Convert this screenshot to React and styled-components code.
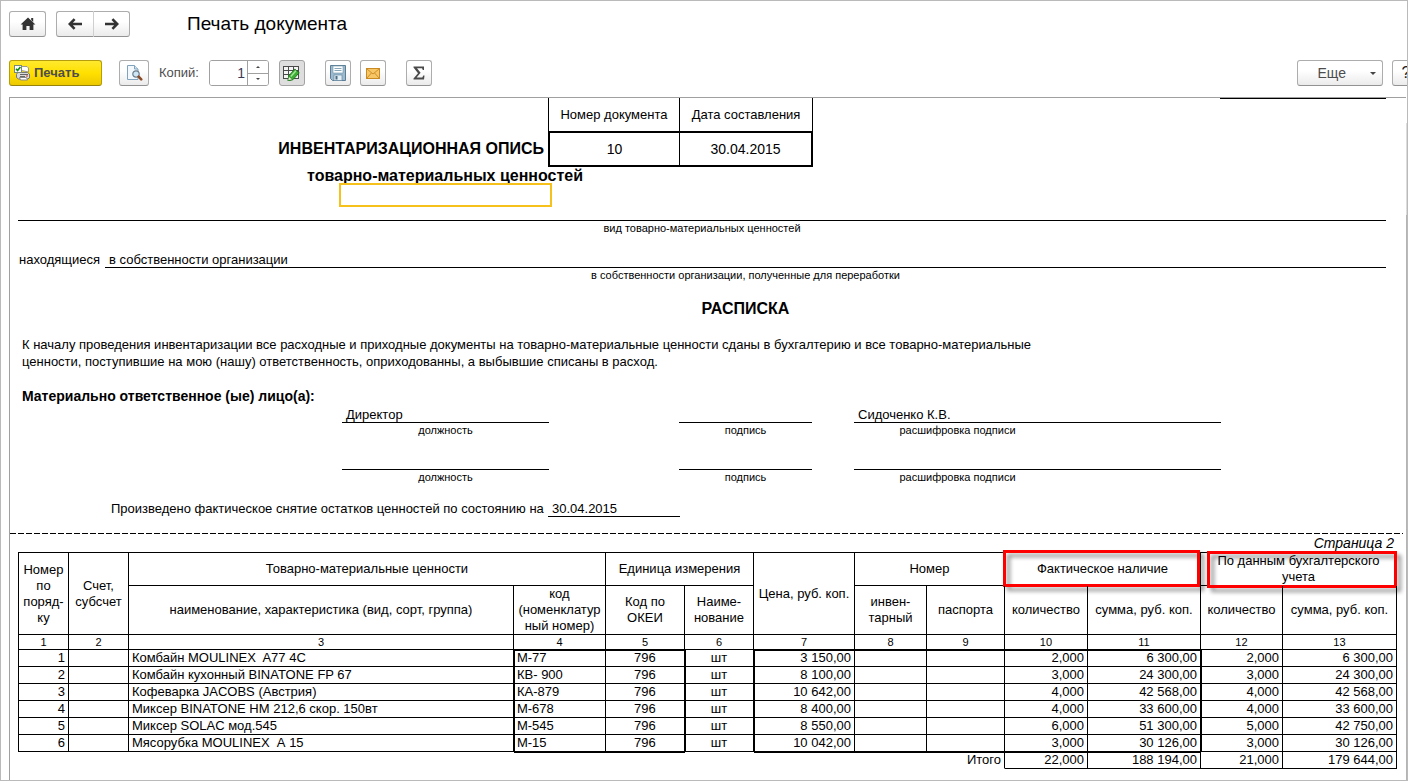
import React, { useState } from 'react';
import styled, { createGlobalStyle, css } from 'styled-components';

const GlobalStyle = createGlobalStyle`
  * {
    box-sizing: border-box;
  }

  body {
    margin: 0;
    background: #fff;
    color: #000;
    font-family: 'Liberation Sans', Arial, sans-serif;
    font-size: 13px;
    line-height: 16px;
  }

  button, input {
    font: inherit;
    color: inherit;
    margin: 0;
    padding: 0;
  }
`;

const Frame = styled.div`
  display: flex;
  flex-direction: column;
  min-height: 100vh;
  border: 1px solid #bababa;
  overflow: hidden;
`;

/* ---------- window header ---------- */

const NavBar = styled.header`
  display: flex;
  align-items: center;
  gap: 10px;
  padding: 10px 8px 0;
`;

const Title = styled.h1`
  margin: 0 0 0 47px;
  font-size: 19px;
  line-height: 24px;
  font-weight: 400;
`;

const Button = styled.button`
  display: flex;
  align-items: center;
  justify-content: center;
  width: ${({ $width }) => $width || 26}px;
  height: 26px;
  flex: none;
  border: 1px solid #adadad;
  border-bottom-color: #929292;
  border-radius: 3px;
  background: linear-gradient(#fff 40%, #ebebeb);
  color: #4d4d4d;

  ${({ $pressed }) =>
    $pressed &&
    css`
      background: #dedede;
      border-color: #a3a3a3;
    `}
`;

const NavPair = styled.div`
  display: flex;

  ${Button}:first-child {
    border-radius: 3px 0 0 3px;
    border-right-color: #cfcfcf;
  }

  ${Button}:last-child {
    border-radius: 0 3px 3px 0;
    border-left: 0;
  }
`;

/* ---------- toolbar ---------- */

const Toolbar = styled.div`
  display: flex;
  align-items: center;
  padding: 23px 0 11px 8px;
`;

const ToolGroup = styled.div`
  display: flex;
  align-items: center;
  gap: ${({ $gap }) => $gap || 10}px;
  margin-left: ${({ $before }) => $before || 0}px;
`;

const PrintButton = styled(Button)`
  justify-content: flex-start;
  gap: 4px;
  padding-left: 4px;
  border-color: #b59d0c;
  border-bottom-color: #97820a;
  background: linear-gradient(#ffe92e, #ffe000 50%, #ecc900);
  font-weight: 700;
`;

const CopiesLabel = styled.label`
  color: #4d4d4d;
  font-size: 13px;
`;

const Spinner = styled.div`
  display: flex;
  width: 60px;
  height: 26px;
  border: 1px solid #a0a0a0;
  border-radius: 3px;
  overflow: hidden;

  input {
    flex: 1;
    width: 0;
    border: 0;
    outline: 0;
    text-align: right;
    padding-right: 2px;
    font-size: 14px;
    color: #3a3a55;
  }
`;

const Steps = styled.div`
  display: flex;
  flex-direction: column;
  width: 21px;
  border-left: 1px solid #a0a0a0;

  button {
    display: flex;
    align-items: center;
    justify-content: center;
    flex: 1;
    border: 0;
    background: #fff;
  }

  button + button {
    border-top: 1px solid #a0a0a0;
  }
`;

const ToolbarEnd = styled.div`
  display: flex;
  gap: 9px;
  margin-left: auto;
  margin-right: -13px;
`;

const MoreButton = styled(Button)`
  justify-content: flex-end;
  gap: 24px;
  padding-right: 6px;
  font-size: 14px;
`;

const HelpButton = styled(Button)`
  font-size: 16px;
  color: #222;
`;

/* ---------- printed sheet ---------- */

const Viewer = styled.div`
  display: flex;
  flex: 1;
  padding-left: 8px;
`;

const Sheet = styled.main`
  flex: 1;
  min-width: 0;
  border-top: 1px solid #a0a0a0;
  border-left: 1px solid #a0a0a0;
`;

const ScrollEdge = styled.div`
  width: 1px;
  margin-top: 26px;
  background: linear-gradient(#dcdcdc 92px, #b4b4b4 92px);
`;

const Page = styled.section`
  padding: 0 20px 16px 8px;
`;

const DocHead = styled.div`
  display: flex;
  align-items: flex-end;
`;

const DocTitle = styled.h2`
  width: 530px;
  margin: 0;
  padding-right: 4px;
  text-align: right;
  font-size: 16px;
  line-height: 36px;
`;

const MetaTable = styled.table`
  width: 265px;
  border-spacing: 0;
  table-layout: fixed;

  th, td {
    padding: 0;
    text-align: center;
    font-weight: 400;
  }

  th {
    height: 33px;
    border-left: 1px solid #000;
  }

  th:first-child {
    width: 131px;
  }

  th:last-child {
    border-right: 1px solid #000;
  }

  td {
    height: 36px;
    border: 2px solid #000;
    border-right: 0;
    font-size: 14px;
  }

  td:last-child {
    border-left-width: 1px;
    border-right: 2px solid #000;
  }
`;

const TopRule = styled.div`
  align-self: flex-start;
  width: 166px;
  margin-left: auto;
  border-top: 1px solid #000;
`;

const Subject = styled.div`
  width: 284px;
  margin: 2px 0 13px 285px;
`;

const SubjectText = styled.h3`
  margin: 0;
  text-align: center;
  white-space: nowrap;
  font-size: 16px;
  line-height: 14px;
`;

const ActiveCell = styled.div`
  position: relative;
  width: 213px;
  height: 24px;
  margin: 0 auto;
  border: 2px solid #f6c11b;
  background: #fff;
`;

const Caption = styled.div`
  width: ${({ $width }) => ($width ? `${$width}px` : 'auto')};
  font-size: 11px;
  line-height: 14px;
  text-align: center;
`;

const Rule = styled.div`
  border-top: 1px solid #000;
`;

const Line = styled.div`
  display: flex;
  margin-top: 16px;
  line-height: 18px;
`;

const LineLabel = styled.span`
  width: 87px;
  padding-left: 1px;
`;

const Field = styled.div`
  flex: 1;
`;

const Value = styled.div`
  height: 17px;
  padding-left: 4px;
  border-bottom: 1px solid #000;
  line-height: 18px;
`;

const ReceiptTitle = styled.h2`
  margin: 17px 0;
  padding-left: 87px;
  text-align: center;
  font-size: 16px;
  line-height: 20px;
`;

const Statement = styled.p`
  margin: 0 0 17px;
  padding-left: 4px;
  line-height: 17px;
`;

const PersonsTitle = styled.h3`
  margin: 0 0 1px;
  padding-left: 4px;
  font-size: 14px;
  line-height: 18px;
`;

const SignatureRow = styled.div`
  display: grid;
  grid-template-columns: 207px 46px 133px 367px;
  column-gap: 42px;
  padding-left: 324px;
  margin-bottom: 16px;

  > :nth-child(2) {
    grid-column: 3;
  }
`;

const StockDate = styled.div`
  display: flex;
  padding-left: 93px;
  line-height: 18px;
`;

const StockText = styled.span`
  width: 437px;
  height: 17px;
`;

const DateValue = styled(Value)`
  width: 132px;
`;

const PageBreak = styled.div`
  height: 1px;
  margin-right: 3px;
  background: repeating-linear-gradient(90deg, #000 0 6px, transparent 6px 8px);
`;

const PageNumber = styled.div`
  padding-right: 3px;
  text-align: right;
  font-size: 14px;
  line-height: 18px;
  font-style: italic;
`;

const SecondPage = styled.section`
  padding: 0 9px 10px 8px;
`;

/* ---------- inventory table ---------- */

const Inventory = styled.table`
  width: 100%;
  table-layout: fixed;
  border-spacing: 0;
`;

const Head = styled.th`
  position: relative;
  height: ${({ $height }) => $height}px;
  padding: 0;
  border-right: 1px solid #000;
  border-bottom: 1px solid #000;
  border-top: ${({ $top }) => ($top ? '1px solid #000' : '0')};
  border-left: ${({ $first }) => ($first ? '1px solid #000' : '0')};
  font-weight: 400;
  font-size: ${({ $small }) => ($small ? 11 : 13)}px;
  line-height: ${({ $small }) => ($small ? 14 : 16)}px;
  text-align: center;
  white-space: nowrap;
`;

const thickEdges = ({ $thickTop, $thickLeft }) => {
  const edges = [];
  if ($thickTop) edges.push('inset 0 1px 0 #000');
  if ($thickLeft) edges.push('inset 1px 0 0 #000');
  return edges.length ? edges.join(', ') : 'none';
};

const Cell = styled.td`
  height: 17px;
  padding: 0 3px;
  border-right: 1px solid #000;
  border-bottom: 1px solid #000;
  border-left: ${({ $first }) => ($first ? '1px solid #000' : '0')};
  box-shadow: ${thickEdges};
  text-align: ${({ $align }) => $align || 'left'};
  white-space: pre;
`;

const TotalCell = styled(Cell)`
  border-bottom: 1px solid ${({ $filled }) => ($filled ? '#000' : 'transparent')};
  border-right: ${({ $open }) => ($open ? '0' : '1px solid #000')};
  text-align: right;
`;

// red frame drawn over a header cell
const Mark = styled.span`
  position: absolute;
  inset: ${({ $inset }) => $inset};
  border: 3px solid #f00;
  filter: drop-shadow(4px 4px 2px rgba(0, 0, 0, 0.45));
`;

const columnWidths = [51, 60, null, 92, 79, 69, 101, 72, 78, 83, 113, 82, 114];

const aligns = [
  'right', 'left', 'left', 'left', 'center', 'center', 'right',
  'left', 'left', 'right', 'right', 'right', 'right',
];

const rows = [
  ['1', '', 'Комбайн MOULINEX  A77 4C', 'М-77', '796', 'шт', '3 150,00', '', '', '2,000', '6 300,00', '2,000', '6 300,00'],
  ['2', '', 'Комбайн кухонный BINATONE FP 67', 'КВ- 900', '796', 'шт', '8 100,00', '', '', '3,000', '24 300,00', '3,000', '24 300,00'],
  ['3', '', 'Кофеварка JACOBS (Австрия)', 'КА-879', '796', 'шт', '10 642,00', '', '', '4,000', '42 568,00', '4,000', '42 568,00'],
  ['4', '', 'Миксер BINATONE HM 212,6 скор. 150вт', 'М-678', '796', 'шт', '8 400,00', '', '', '4,000', '33 600,00', '4,000', '33 600,00'],
  ['5', '', 'Миксер SOLAC мод.545', 'М-545', '796', 'шт', '8 550,00', '', '', '6,000', '51 300,00', '5,000', '42 750,00'],
  ['6', '', 'Мясорубка MOULINEX  А 15', 'М-15', '796', 'шт', '10 042,00', '', '', '3,000', '30 126,00', '3,000', '30 126,00'],
];

const thickLeftColumns = [3, 5, 6, 11];
const thickTopColumns = [3, 4, 6, 7, 8, 9, 10];

/* ---------- icons ---------- */

const HomeIcon = () => (
  <svg width="16" height="14" viewBox="0 0 16 14" fill="#333">
    <path d="M8 0.5 15.4 7.6H13.4V13H9.6V9H6.4V13H2.6V7.6H0.6Z" />
    <path d="M11.2 1h2v4l-2-2z" />
  </svg>
);

const ArrowIcon = ({ right }) => (
  <svg width="14" height="12" viewBox="0 0 14 12" fill="none" stroke="#333" strokeWidth="2.6">
    {right ? <path d="M0 6h12M7.4 1.2 12.2 6l-4.8 4.8" /> : <path d="M14 6H2M6.6 1.2 1.8 6l4.8 4.8" />}
  </svg>
);

const PrintIcon = () => (
  <svg width="16" height="16" viewBox="0 0 16 16">
    <path d="M5.5 5V1.5h7.5l1.5 1.5V7z" fill="#fff" stroke="#9a9a9a" />
    <path d="M3.5 7.5h10l2 1.5v4l-2 1h-9l-2-1.5v-3z" fill="#d9d9d9" stroke="#777" />
    <path d="M6 9.5h8M6 11.5h5" stroke="#666" />
    <path d="M12 11h2" stroke="#d03a2a" />
    <path d="M5.5 12.5h7l1 2.5h-7z" fill="#fff" stroke="#888" />
    <rect x="0.5" y="0.5" width="7" height="7" fill="#fff" stroke="#7a8a7a" />
    <path d="M2 3.8 3.6 5.6 6.4 2" fill="none" stroke="#128a1c" strokeWidth="1.6" />
  </svg>
);

const PreviewIcon = () => (
  <svg width="17" height="16" viewBox="0 0 17 16">
    <path d="M1.5 0.5h7l3.5 3.5v10.5H1.5z" fill="#f2f8fc" stroke="#7fa3bd" />
    <path d="M8.5 0.5v3.5h3.5" fill="#d4e4ef" stroke="#7fa3bd" />
    <circle cx="10" cy="9" r="3.2" fill="#cfe6f5" stroke="#6b7d8c" strokeWidth="1.2" />
    <path d="M12.6 11.6l2.6 2.8" stroke="#8a4b26" strokeWidth="2.6" strokeLinecap="round" />
  </svg>
);

const EditGridIcon = () => (
  <svg width="17" height="16" viewBox="0 0 17 16">
    <rect x="0.5" y="1.5" width="15" height="12" fill="#f4f4f4" stroke="#4a4a4a" />
    <path d="M0.5 5.5h15M0.5 9.5h15M5.5 1.5v12M10.5 1.5v12" stroke="#4a4a4a" />
    <path d="M5.600 11 11.800 4.200l4.400 3.600-6.200 6.800-4.800 1.200z" fill="#3fae35" stroke="#1c7a1a" />
    <path d="M7.800 11.400 13 5.800" stroke="#a6e59a" strokeWidth="1.4" />
    <path d="M4.800 15.600 5.800 11.400l3.800 3.200z" fill="#f1f7d8" stroke="#1c7a1a" strokeWidth="0.6" />
  </svg>
);

const SaveIcon = () => (
  <svg width="16" height="16" viewBox="0 0 16 16">
    <path d="M0.5 0.5h15v15h-13l-2-2z" fill="#9dbace" stroke="#5b7d96" />
    <rect x="3" y="1" width="10" height="7" fill="#fff" stroke="#7394aa" strokeWidth="0.6" />
    <path d="M4.500 3.500h7M4.500 5.500h7" stroke="#8aa7ba" />
    <rect x="4" y="10" width="8" height="5.500" fill="#e3eef5" stroke="#5b7d96" strokeWidth="0.6" />
    <rect x="5.500" y="11" width="2" height="3.500" fill="#4b6c84" />
  </svg>
);

const MailIcon = () => (
  <svg width="14" height="11" viewBox="0 0 14 11">
    <rect x="0.5" y="0.5" width="13" height="10" fill="#f6c667" stroke="#c98a22" />
    <path d="M1 1l6 5 6-5M1 10l4.400-5M13 10 8.600 5" fill="none" stroke="#c98a22" strokeWidth="0.9" />
  </svg>
);

const SumIcon = () => (
  <svg width="12" height="14" viewBox="0 0 12 14" fill="#4a4a4a">
    <path d="M0.5 0.5H11V4H9.800L9 2.300H4L7.600 6.800 3.600 11.600H9.300L10.300 9.600H11.500L11 13.500H0.500V12.600L5 7.300 0.500 1.600Z" />
  </svg>
);

const Triangle = ({ up, size = 3 }) => (
  <svg width={size * 2} height={size} viewBox="0 0 6 3" fill="#444">
    <path d={up ? 'M0 3 3 0l3 3z' : 'M0 0h6L3 3z'} />
  </svg>
);

const SignatureLine = ({ post, name }) => (
  <SignatureRow>
    <div>
      <Value>{post}</Value>
      <Caption>должность</Caption>
    </div>
    <div>
      <Value />
      <Caption>подпись</Caption>
    </div>
    <div>
      <Value>{name}</Value>
      <Caption $width={207}>расшифровка подписи</Caption>
    </div>
  </SignatureRow>
);

const InventoryTable = () => (
  <Inventory>
    <colgroup>
      {columnWidths.map((width, i) => (
        <col key={i} width={width || undefined} />
      ))}
    </colgroup>
    <thead>
      <tr>
        <Head $top $first rowSpan={2}>Номер<br />по<br />поряд-<br />ку</Head>
        <Head $top rowSpan={2}>Счет,<br />субсчет</Head>
        <Head $top $height={34} colSpan={2}>Товарно-материальные ценности</Head>
        <Head $top colSpan={2}>Единица измерения</Head>
        <Head $top rowSpan={2}>Цена, руб. коп.</Head>
        <Head $top colSpan={2}>Номер</Head>
        <Head $top colSpan={2}>
          Фактическое наличие
          <Mark $inset="-3px 0 -2px -2px" />
        </Head>
        <Head $top colSpan={2}>
          По данным бухгалтерского<br />учета
          <Mark $inset="-2px -1px -3px 6px" />
        </Head>
      </tr>
      <tr>
        <Head $height={49}>наименование, характеристика (вид, сорт, группа)</Head>
        <Head>код<br />(номенклатур<br />ный номер)</Head>
        <Head>Код по<br />ОКЕИ</Head>
        <Head>Наиме-<br />нование</Head>
        <Head>инвен-<br />тарный</Head>
        <Head>паспорта</Head>
        <Head>количество</Head>
        <Head>сумма, руб. коп.</Head>
        <Head>количество</Head>
        <Head>сумма, руб. коп.</Head>
      </tr>
      <tr>
        {columnWidths.map((_, i) => (
          <Head key={i} $small $height={15} $first={i === 0}>{i + 1}</Head>
        ))}
      </tr>
    </thead>
    <tbody>
      {rows.map((row, r) => (
        <tr key={row[0]}>
          {row.map((text, c) => (
            <Cell
              key={c}
              $first={c === 0}
              $align={aligns[c]}
              $thickLeft={thickLeftColumns.includes(c)}
              $thickTop={r === 0 && thickTopColumns.includes(c)}
            >
              {text}
            </Cell>
          ))}
        </tr>
      ))}
    </tbody>
    <tfoot>
      <tr>
        <TotalCell $open colSpan={3} />
        <TotalCell $open $thickTop colSpan={2} />
        <TotalCell $open />
        <TotalCell $thickTop colSpan={3}>Итого</TotalCell>
        <TotalCell $filled $thickTop>22,000</TotalCell>
        <TotalCell $filled $thickTop>188 194,00</TotalCell>
        <TotalCell $filled>21,000</TotalCell>
        <TotalCell $filled>179 644,00</TotalCell>
      </tr>
    </tfoot>
  </Inventory>
);

export default function App() {
  const [copies, setCopies] = useState(1);

  return (
    <Frame>
      <GlobalStyle />
      <NavBar>
        <Button $width={37} aria-label="Домой"><HomeIcon /></Button>
        <NavPair>
          <Button $width={38} aria-label="Назад"><ArrowIcon /></Button>
          <Button $width={36} aria-label="Вперед"><ArrowIcon right /></Button>
        </NavPair>
        <Title>Печать документа</Title>
      </NavBar>

      <Toolbar>
        <PrintButton $width={93}><PrintIcon />Печать</PrintButton>
        <ToolGroup $before={17}>
          <Button $width={30} aria-label="Просмотр"><PreviewIcon /></Button>
          <CopiesLabel htmlFor="copies">Копий:</CopiesLabel>
          <Spinner>
            <input
              id="copies"
              type="text"
              value={copies}
              onChange={(e) => setCopies(Number(e.target.value) || 1)}
            />
            <Steps>
              <button aria-label="Больше" onClick={() => setCopies(copies + 1)}><Triangle up size={2} /></button>
              <button aria-label="Меньше" onClick={() => setCopies(Math.max(1, copies - 1))}><Triangle size={2} /></button>
            </Steps>
          </Spinner>
          <Button $pressed aria-label="Редактирование"><EditGridIcon /></Button>
        </ToolGroup>
        <ToolGroup $before={20} $gap={9}>
          <Button aria-label="Сохранить"><SaveIcon /></Button>
          <Button aria-label="Отправить"><MailIcon /></Button>
        </ToolGroup>
        <ToolGroup $before={20}>
          <Button aria-label="Сумма"><SumIcon /></Button>
        </ToolGroup>
        <ToolbarEnd>
          <MoreButton $width={86}>Еще<Triangle /></MoreButton>
          <HelpButton $width={28}>?</HelpButton>
        </ToolbarEnd>
      </Toolbar>

      <Viewer>
        <Sheet>
          <Page>
            <DocHead>
              <DocTitle>ИНВЕНТАРИЗАЦИОННАЯ ОПИСЬ</DocTitle>
              <MetaTable>
                <thead>
                  <tr>
                    <th>Номер документа</th>
                    <th>Дата составления</th>
                  </tr>
                </thead>
                <tbody>
                  <tr>
                    <td>10</td>
                    <td>30.04.2015</td>
                  </tr>
                </tbody>
              </MetaTable>
              <TopRule />
            </DocHead>

            <Subject>
              <SubjectText>товарно-материальных ценностей</SubjectText>
              <ActiveCell />
            </Subject>
            <Rule />
            <Caption>вид товарно-материальных ценностей</Caption>

            <Line>
              <LineLabel>находящиеся</LineLabel>
              <Field>
                <Value>в собственности организации</Value>
                <Caption>в собственности организации, полученные для переработки</Caption>
              </Field>
            </Line>

            <ReceiptTitle>РАСПИСКА</ReceiptTitle>
            <Statement>
              К началу проведения инвентаризации все расходные и приходные документы на товарно-материальные ценности сданы в бухгалтерию и все товарно-материальные
              <br />
              ценности, поступившие на мою (нашу) ответственность, оприходованны, а выбывшие списаны в расход.
            </Statement>

            <PersonsTitle>Материально ответственное (ые) лицо(а):</PersonsTitle>
            <SignatureLine post="Директор" name="Сидоченко К.В." />
            <SignatureLine />

            <StockDate>
              <StockText>Произведено фактическое снятие остатков ценностей по состоянию на</StockText>
              <DateValue>30.04.2015</DateValue>
            </StockDate>
          </Page>

          <PageBreak />
          <SecondPage>
            <PageNumber>Страница 2</PageNumber>
            <InventoryTable />
          </SecondPage>
        </Sheet>
        <ScrollEdge />
      </Viewer>
    </Frame>
  );
}
